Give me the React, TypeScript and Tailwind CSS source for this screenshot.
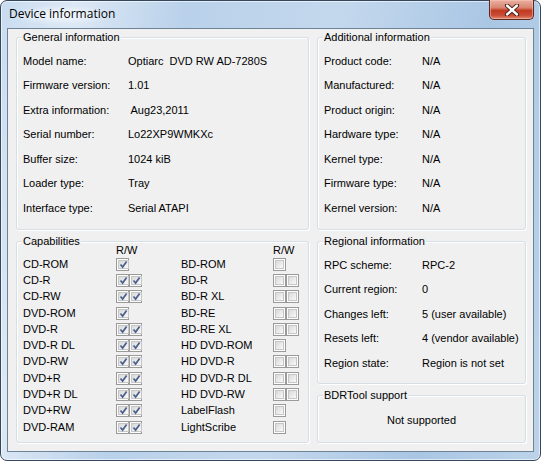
import React from 'react';

type Row = [string, string];

const general: Row[] = [
  ['Model name:', 'Optiarc  DVD RW AD-7280S'],
  ['Firmware version:', '1.01'],
  ['Extra information:', ' Aug23,2011'],
  ['Serial number:', 'Lo22XP9WMKXc'],
  ['Buffer size:', '1024 kiB'],
  ['Loader type:', 'Tray'],
  ['Interface type:', 'Serial ATAPI'],
];

const additional: Row[] = [
  ['Product code:', 'N/A'],
  ['Manufactured:', 'N/A'],
  ['Product origin:', 'N/A'],
  ['Hardware type:', 'N/A'],
  ['Kernel type:', 'N/A'],
  ['Firmware type:', 'N/A'],
  ['Kernel version:', 'N/A'],
];

const regional: Row[] = [
  ['RPC scheme:', 'RPC-2'],
  ['Current region:', '0'],
  ['Changes left:', '5 (user available)'],
  ['Resets left:', '4 (vendor available)'],
  ['Region state:', 'Region is not set'],
];

// [name, boxes] where boxes lists checked state of read / write
type Cap = [string, boolean[]];

const capsLeft: Cap[] = [
  ['CD-ROM', [true]],
  ['CD-R', [true, true]],
  ['CD-RW', [true, true]],
  ['DVD-ROM', [true]],
  ['DVD-R', [true, true]],
  ['DVD-R DL', [true, true]],
  ['DVD-RW', [true, true]],
  ['DVD+R', [true, true]],
  ['DVD+R DL', [true, true]],
  ['DVD+RW', [true, true]],
  ['DVD-RAM', [true, true]],
];

const capsRight: Cap[] = [
  ['BD-ROM', [false]],
  ['BD-R', [false, false]],
  ['BD-R XL', [false, false]],
  ['BD-RE', [false, false]],
  ['BD-RE XL', [false, false]],
  ['HD DVD-ROM', [false]],
  ['HD DVD-R', [false, false]],
  ['HD DVD-R DL', [false, false]],
  ['HD DVD-RW', [false, false]],
  ['LabelFlash', [false]],
  ['LightScribe', [false]],
];

const GroupBox: React.FC<{ title: string; className?: string; children?: React.ReactNode }> = ({ title, className = '', children }) => (
  <div className={`relative rounded-[3px] border border-[#d5dfe5] shadow-[inset_1px_1px_0_#fff,1px_1px_0_#fff] ${className}`}>
    <span className="absolute -top-[8px] left-[5px] bg-[#f0f0f0] px-[1px] leading-[14px]">{title}</span>
    {children}
  </div>
);

const InfoRows: React.FC<{ rows: Row[]; labelWidth: string }> = ({ rows, labelWidth }) => (
  <div className="flex flex-col pt-[11px] pl-[6px]">
    {rows.map(([k, v]) => (
      <div key={k} className="flex h-[24.5px] items-center">
        <span className={labelWidth}>{k}</span>
        <span className="whitespace-pre">{v}</span>
      </div>
    ))}
  </div>
);

const CheckBox: React.FC<{ checked: boolean }> = ({ checked }) => (
  <span className="flex h-[13px] w-[13px] border border-[#9a9a9a] bg-[#fdfdfd] p-[1px]">
    <span className="flex flex-1 items-center justify-center border border-[#c6c6c6] bg-[linear-gradient(135deg,#d9d9d9,#f9f9f9)]">
      {checked && (
        <svg width="9" height="9" viewBox="0 0 9 9">
          <path d="M1.5 4.5 L3.6 7 L7.6 1.4" fill="none" stroke="#4b5f8c" strokeWidth="1.7" />
        </svg>
      )}
    </span>
  </span>
);

const CapColumn: React.FC<{ caps: Cap[]; labelWidth: string }> = ({ caps, labelWidth }) => (
  <div className="flex flex-col">
    <div className="flex h-[12px] items-center">
      <span className={labelWidth} />
      <span>R/W</span>
    </div>
    {caps.map(([name, boxes]) => (
      <div key={name} className="flex h-[16.3px] items-center">
        <span className={labelWidth}>{name}</span>
        <span className="flex">
          {boxes.map((c, i) => (
            <CheckBox key={i} checked={c} />
          ))}
        </span>
      </div>
    ))}
  </div>
);

export default function App() {
  return (
    <div className="h-[461px] w-[541px] bg-white">
      <div className="relative flex h-[461px] w-[541px] flex-col rounded-[7px] border border-[#34475c] bg-[linear-gradient(100deg,#c8dcf0_0%,#dce8f5_12%,#b9d1ea_30%,#c4d8ed_55%,#a9c6e4_80%,#bcd3ea_100%)] px-[6px] pb-[8px] shadow-[inset_0_0_0_1px_rgba(255,255,255,0.6)]">
        <div className="flex h-[27px] items-center pl-[1px]">
          <span className="rounded-full bg-[radial-gradient(ellipse_at_center,rgba(255,255,255,0.75),rgba(255,255,255,0)_70%)] px-[1px] pb-[2px] text-[12px] text-black [font-family:'Open_Sans','Noto_Sans',sans-serif]">
            Device information
          </span>
        </div>

        <div className="absolute -top-px right-[6px] flex h-[20px] w-[45px] items-center justify-center rounded-b-[5px] border border-t-0 border-[#5a2a22] bg-[linear-gradient(180deg,#e9b1a3_0%,#d98670_40%,#c23a22_55%,#c94b33_80%,#e08a6f_100%)] shadow-[inset_0_0_0_1px_rgba(255,200,190,0.5)]">
          <svg width="16" height="12" viewBox="0 0 16 12">
            <path d="M3 1.5 L13 10.5 M13 1.5 L3 10.5" stroke="#3a1510" strokeWidth="4.2" strokeLinecap="round" />
            <path d="M3 1.5 L13 10.5 M13 1.5 L3 10.5" stroke="#ffffff" strokeWidth="2.4" strokeLinecap="round" />
          </svg>
        </div>

        <div className="flex flex-1 flex-col border border-[#6f8296] bg-[#f0f0f0] pt-[8px] pl-[8px] text-[11px] leading-none text-black [font-family:'Liberation_Sans',Arial,sans-serif]">
          <div className="flex gap-[8px]">
            <GroupBox title="General information" className="h-[193px] w-[293px]">
              <InfoRows rows={general} labelWidth="w-[105px]" />
            </GroupBox>
            <GroupBox title="Additional information" className="h-[193px] w-[209px]">
              <InfoRows rows={additional} labelWidth="w-[98px]" />
            </GroupBox>
          </div>

          <div className="mt-[11px] flex gap-[8px]">
            <GroupBox title="Capabilities" className="h-[202px] w-[293px]">
              <div className="flex pt-[2px] pl-[6px]">
                <CapColumn caps={capsLeft} labelWidth="w-[93px]" />
                <div className="w-[39px]" />
                <CapColumn caps={capsRight} labelWidth="w-[92px]" />
              </div>
            </GroupBox>
            <div className="flex w-[209px] flex-col gap-[11px]">
              <GroupBox title="Regional information" className="h-[143px]">
                <InfoRows rows={regional} labelWidth="w-[98px]" />
              </GroupBox>
              <GroupBox title="BDRTool support" className="flex h-[48px] items-center justify-center">
                <span className="pt-[2px]">Not supported</span>
              </GroupBox>
            </div>
          </div>
        </div>
      </div>
    </div>
  );
}
